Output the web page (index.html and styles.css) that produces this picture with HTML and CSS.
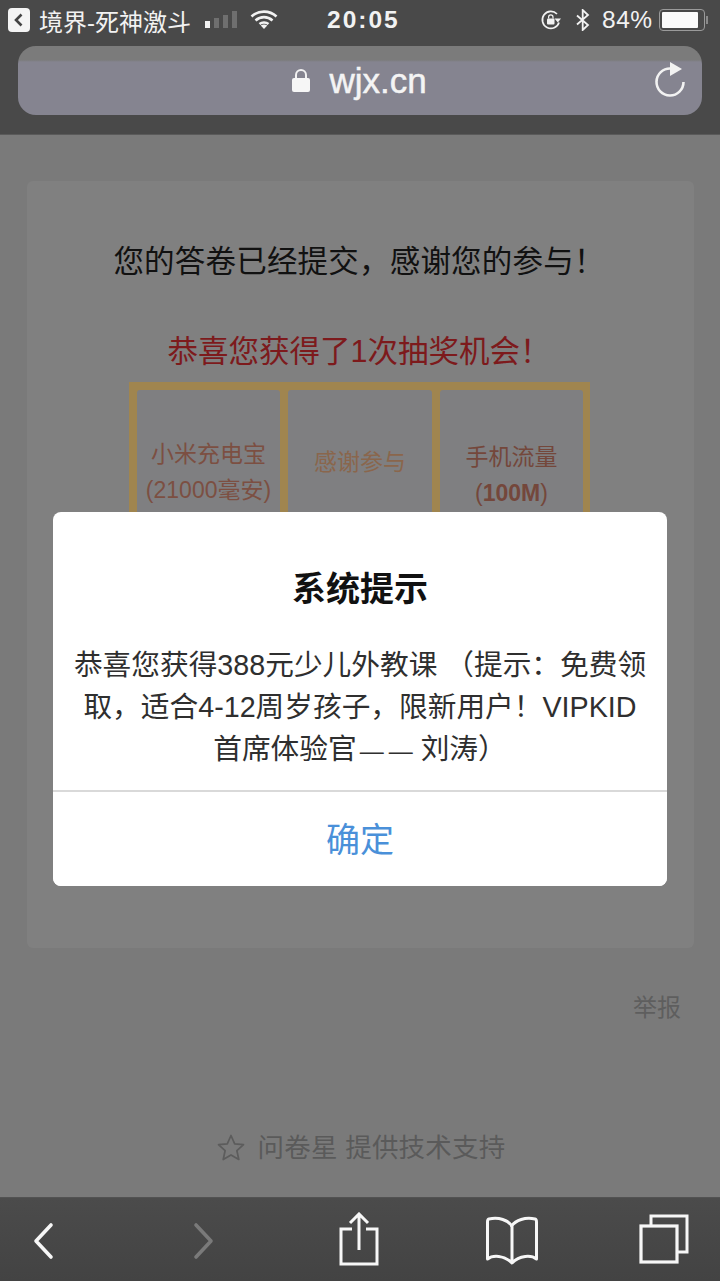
FILE: index.html
```html
<!DOCTYPE html>
<html lang="zh">
<head>
<meta charset="utf-8">
<title>问卷星</title>
<link rel="stylesheet" href="styles.css">
</head>
<body>
<div class="phone">
  <header class="chrome">
    <div class="status">
      <div class="status-left">
        <span class="back-app"><svg width="22" height="24" viewBox="0 0 22 24"><rect x="0" y="0" width="22" height="24" rx="4" fill="#f4f4f4"/><path d="M13.500 6.500 8 12l5.500 5.500" fill="none" stroke="#444" stroke-width="2.600"/></svg></span>
        <span class="app-name">境界-死神激斗</span>
        <svg class="signal" width="34" height="22" viewBox="0 0 34 22"><rect x="0" y="12" width="5" height="7" fill="#f2f2f2"/><rect x="9" y="9" width="5" height="10" fill="#6f6f6f"/><rect x="18" y="6" width="5" height="13" fill="#6f6f6f"/><rect x="27" y="2" width="5" height="17" fill="#6f6f6f"/></svg>
        <svg class="wifi" width="28" height="22" viewBox="0 0 28 22"><path d="M1.500 7.500C8.500 1 19.500 1 26.500 7.500M5.500 11.500C10.500 7 17.500 7 22.500 11.500M9.500 15C12 13 16 13 18.500 15" fill="none" stroke="#f2f2f2" stroke-width="2.600"/><path d="M14 20l-3.300-3.500c2-1.300 4.600-1.300 6.600 0z" fill="#f2f2f2"/></svg>
      </div>
      <span class="clock">20:05</span>
      <div class="status-right">
        <svg class="rotate" width="22" height="22" viewBox="0 0 22 22"><path d="M19 13.500A8.500 8.500 0 1 1 17 5" fill="none" stroke="#f2f2f2" stroke-width="1.700"/><path d="M14.500 9.500h6.500l-3.200 4z" fill="#f2f2f2"/><rect x="7" y="9.500" width="7.500" height="6" rx="1" fill="#f2f2f2"/><path d="M8.600 9.500V8a2.200 2.200 0 0 1 4.400 0v1.500" fill="none" stroke="#f2f2f2" stroke-width="1.200"/></svg>
        <svg class="bt" width="16" height="22" viewBox="0 0 16 22"><path d="M2 6.500l11 9.500-5.300 5V1l5.300 5L2 15.500" fill="none" stroke="#f2f2f2" stroke-width="1.800"/></svg>
        <span class="battery-pct">84%</span>
        <span class="battery"><span class="battery-level"></span></span>
        <span class="battery-tip"></span>
      </div>
    </div>
    <div class="urlbar">
      <span class="url-main">
        <svg width="20" height="28" viewBox="0 0 20 28"><path d="M5 12V8a5 5 0 0 1 10 0v4" fill="none" stroke="#f2f2f2" stroke-width="2"/><rect x="1" y="11" width="18" height="14" rx="2" fill="#f6f6f6"/></svg>
        <span class="url-text">wjx.cn</span>
      </span>
      <svg class="reload" width="34" height="38" viewBox="0 0 34 38"><path d="M29.500 21a13.500 13.500 0 1 1-13-13.500" fill="none" stroke="#f2f2f2" stroke-width="2.600"/><path d="M16 1l12 7-12 7z" fill="#f2f2f2"/></svg>
    </div>
  </header>

  <main class="content">
    <section class="card">
      <p class="thanks">您的答卷已经提交，感谢您的参与<span class="bang">！</span></p>
      <p class="congrats">恭喜您获得了1次抽奖机会<span class="bang">！</span></p>
      <div class="prizes">
        <div class="prize">小米充电宝<br>(21000毫安)</div>
        <div class="prize prize-single">感谢参与</div>
        <div class="prize prize-low">手机流量<br>(<b>100M</b>)</div>
      </div>
    </section>
    <div class="report-row"><span class="report">举报</span></div>
    <div class="support">
      <svg width="30" height="30" viewBox="0 0 30 30"><path d="M15 2.500l3.700 8.300 8.800.9-6.600 6 1.900 8.800-7.800-4.600-7.800 4.600 1.900-8.800-6.600-6 8.800-.9z" fill="none" stroke="#5c5c5c" stroke-width="1.700" stroke-linejoin="round"/></svg>
      <span>问卷星 提供技术支持</span>
    </div>
  </main>

  <nav class="toolbar">
    <svg class="tool-back" width="24" height="38" viewBox="0 0 24 38"><path d="M20 3 5 19l15 16" fill="none" stroke="#f7f7f7" stroke-width="3.600" stroke-linecap="round" stroke-linejoin="round"/></svg>
    <svg class="tool-forward" width="24" height="38" viewBox="0 0 24 38"><path d="M4 3l15 16L4 35" fill="none" stroke="#7a7a7a" stroke-width="3.600" stroke-linecap="round" stroke-linejoin="round"/></svg>
    <svg class="tool-share" width="40" height="54" viewBox="0 0 40 54"><path d="M13 17H2v35h36V17H27M20 38V3M11 11l9-9 9 9" fill="none" stroke="#f7f7f7" stroke-width="3"/></svg>
    <svg class="tool-book" width="52" height="50" viewBox="0 0 52 50"><path d="M26 10C22 4 13 1 3 3c-1.500.5-1.500 1-1.500 3v37c5-4 17-4 24.500 4 7.500-8 19.500-8 24.500-4V6c0-2 0-2.500-1.500-3-10-2-19 1-23.500 7zM26 10v37" fill="none" stroke="#f7f7f7" stroke-width="3" stroke-linejoin="round"/></svg>
    <svg class="tool-tabs" width="50" height="50" viewBox="0 0 50 50"><path d="M12 11V2h36v36h-9" fill="none" stroke="#f7f7f7" stroke-width="3"/><rect x="2" y="12" width="36" height="36" fill="none" stroke="#f7f7f7" stroke-width="3.200"/></svg>
  </nav>

  <div class="dialog" role="dialog">
    <h2 class="dialog-title">系统提示</h2>
    <p class="dialog-text">恭喜您获得388元少儿外教课 （提示：免费领<br>取，适合4-12周岁孩子，限新用户！VIPKID<br>首席体验官<span class="dash">——</span>刘涛）</p>
    <button class="dialog-ok">确定</button>
  </div>
</div>
</body>
</html>
```

FILE: styles.css
```css
* { box-sizing: border-box; }
html, body { margin: 0; padding: 0; }
body {
  width: 720px;
  height: 1281px;
  overflow: hidden;
  font-family: "Liberation Sans", "Noto Sans CJK SC", sans-serif;
}
p, h2 { margin: 0; }
svg { display: block; flex: none; }

.phone {
  position: relative;
  width: 720px;
  height: 1281px;
  display: flex;
  flex-direction: column;
  background: #7a7a7a;
}

/* Browser chrome */
.chrome {
  height: 135px;
  flex: none;
  background: #494949;
  padding: 0 18px;
  border-bottom: 1px solid #5a5a5a;
}
.status {
  height: 46px;
  margin: 0 -18px;
  padding: 0 8px 6px;
  display: flex;
  align-items: center;
  color: #f2f2f2;
}
.status-left { display: flex; align-items: center; width: 319px; flex: none; }
.app-name { font-size: 24px; margin-left: 9px; white-space: nowrap; width: 152px; }
.signal { margin-left: 14px; }
.wifi { margin-left: 11px; }
.clock { font-size: 24.500px; font-weight: 700; letter-spacing: 2px; width: 180px; flex: none; }
.status-right { display: flex; align-items: center; }
.rotate { margin-left: 33px; }
.bt { margin-left: 13px; }
.battery-pct { font-size: 24.500px; margin-left: 11px; letter-spacing: .5px; }
.battery {
  width: 46px;
  height: 22px;
  margin-left: 6px;
  border: 1.500px solid #9a9a9a;
  border-radius: 4px;
  padding: 2px;
  display: block;
}
.battery-level { display: block; width: 36px; height: 100%; background: #fbfbfb; border-radius: 1px; }
.battery-tip { width: 2px; height: 8px; margin-left: 1px; background: #8a8a8a; display: block; }

.urlbar {
  position: relative;
  height: 69px;
  border-radius: 18px;
  background: linear-gradient(#7b7b7b 0, #7b7b7b 14px, #858490 16px, #858490 100%);
  display: flex;
  align-items: center;
  justify-content: center;
}
.url-main { display: flex; align-items: center; gap: 18px; color: #f4f4f4; margin-left: -2px; }
.url-text { font-size: 35px; font-weight: 400; -webkit-text-stroke: .5px #f4f4f4; }
.reload { position: absolute; right: 14px; top: 15px; }

/* Page */
.content {
  flex: 1;
  min-height: 0;
  padding: 46px 26px 0 27px;
  display: flex;
  flex-direction: column;
  overflow: hidden;
}
.card {
  height: 767px;
  background: #808080;
  border-radius: 6px;
  padding-top: 60px;
  flex: none;
}
.thanks { font-size: 30.500px; line-height: 40px; letter-spacing: .2px; text-align: center; color: #111; margin-left: -3px; white-space: nowrap; }
.congrats { font-size: 30.500px; line-height: 40px; text-align: center; color: #7d1a1c; margin-top: 50px; margin-left: -3px; white-space: nowrap; }
.bang { font-family: "Liberation Sans", "Noto Sans CJK TC", sans-serif; }
.prizes {
  margin: 11px 0 0 102px;
  width: 461px;
  height: 300px;
  padding: 8px 7px 8px 8px;
  background: #a0854f;
  display: grid;
  grid-template-columns: 143px 144px 143px;
  gap: 8px;
}
.prize {
  background: #7f7f81;
  border-radius: 3px;
  height: 284px;
  padding-top: 46px;
  text-align: center;
  font-size: 23px;
  line-height: 36px;
  color: #7c4f42;
}
.prize-single { padding-top: 54px; color: #8a664c; }
.prize-low { padding-top: 49px; color: #74473b; }
.prize b { font-weight: 700; }

.report-row { display: flex; justify-content: flex-end; padding: 44px 13px 0 0; flex: none; }
.report { font-size: 24px; line-height: 32px; color: #5e5e5e; }

.support {
  display: flex;
  align-items: center;
  justify-content: center;
  gap: 12px;
  margin-top: 108px;
  font-size: 26.500px;
  line-height: 32px;
  letter-spacing: .2px;
  color: #5a5a5a;
  flex: none;
}

/* Bottom toolbar */
.toolbar {
  position: relative;
  height: 84px;
  flex: none;
  background: linear-gradient(#4b4b4b, #434343);
  border-top: 1px solid #525252;
  display: flex;
  align-items: center;
  padding-left: 31px;
}
.tool-back { margin-top: 2px; }
.tool-forward { margin-left: 137px; margin-top: 2px; }
.tool-share { margin-left: 123px; margin-bottom: 2px; }
.tool-book { margin-left: 107px; margin-top: 2px; }
.tool-tabs { margin-left: 101px; margin-bottom: 2px; }

/* Dialog */
.dialog {
  position: absolute;
  left: 53px;
  top: 512px;
  width: 614px;
  height: 374px;
  background: #fff;
  border-radius: 8px;
  text-align: center;
  overflow: hidden;
}
.dialog-title { font-size: 34px; font-weight: 700; line-height: 44px; padding-top: 55px; color: #111; box-sizing: content-box; height: 44px; }
.dialog-text {
  font-size: 28.700px;
  line-height: 42px;
  color: #2f2f2f;
  padding: 33px 0 0;
  height: 179px;
  white-space: nowrap;
}
.dash { font-size: 24px; letter-spacing: 5px; margin: 0 3px; }
.dialog-ok {
  display: block;
  width: 100%;
  height: 96px;
  padding: 0 0 4px;
  border: 0;
  border-top: 2px solid #d9d9d9;
  background: #fff;
  font-family: inherit;
  font-size: 34px;
  color: #4a90d9;
}
```
